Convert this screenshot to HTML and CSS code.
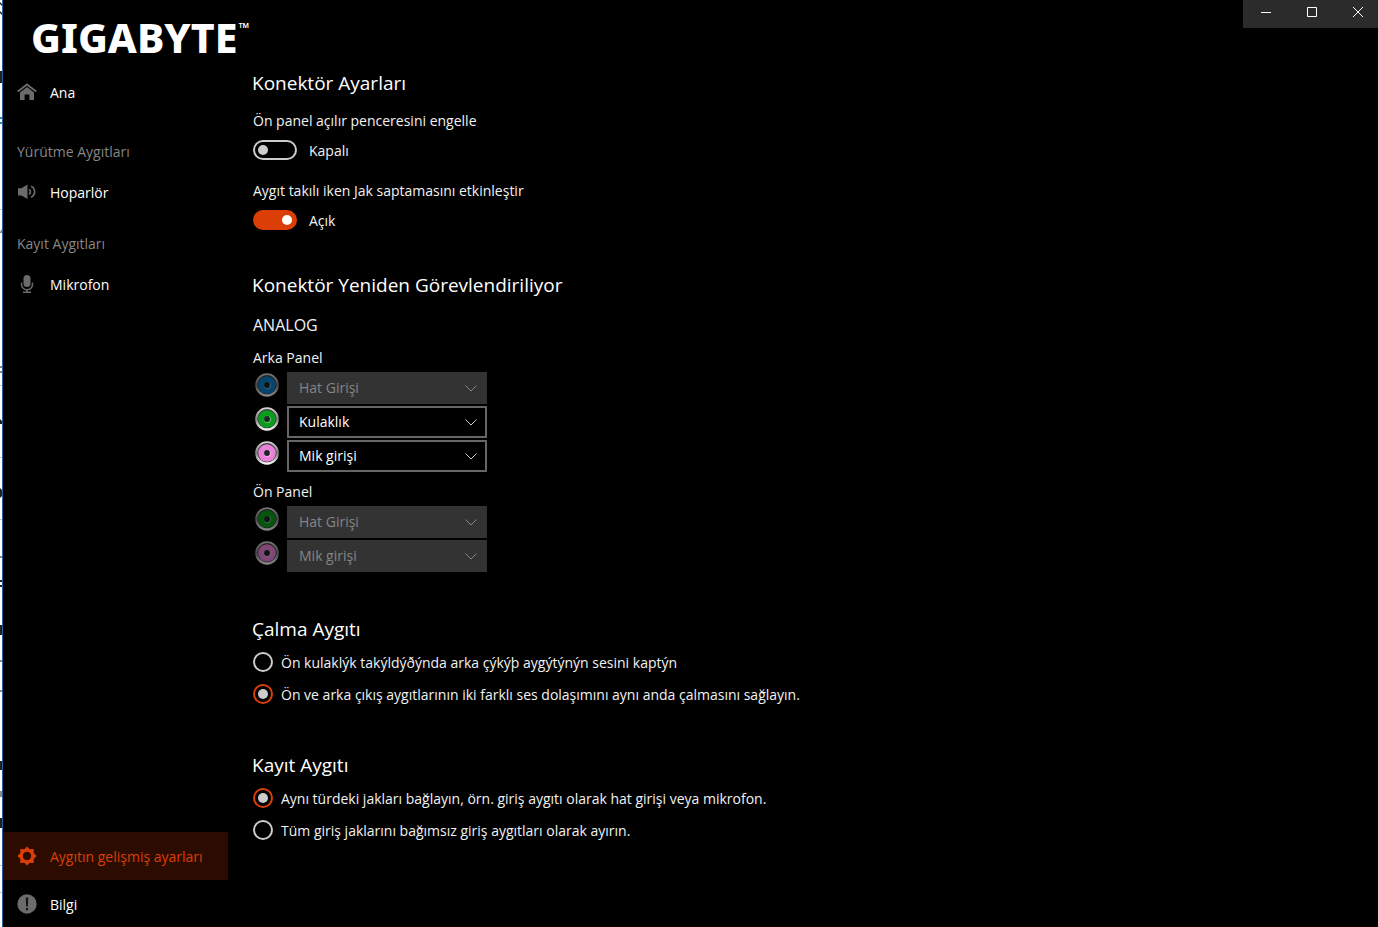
FILE: index.html
```html
<!DOCTYPE html>
<html lang="tr">
<head>
<meta charset="utf-8">
<title>GIGABYTE</title>
<link rel="stylesheet" href="styles.css">
</head>
<body>
<div class="window">
  <div class="backdrop" aria-hidden="true">
    <svg width="3" height="927" viewBox="0 0 3 927">
      <path fill="#222" d="M0 2l2 2v2L0 4zM0 11l2 2v2l-2-2zM0 71h2v12H0zM0 419l2 2v3H0zM0 488l2 2v6l-2 2zM0 580h2v2H0zM0 585h2v2H0zM0 625h2v10H0zM0 761h2v9H0zM0 818h2v10H0z"/>
      <path fill="#2a8fb0" d="M0 117h2v2H0zM0 122h2v2H0z"/>
      <path fill="#888" d="M0 232l2-3v4H0zM0 366h2v2H0zM0 371h2v2H0zM0 556h2v2H0zM0 660h2v2H0zM0 690h2v2H0zM0 791h2v6H0z"/>
      <path fill="#c8c8c8" d="M0 209h2v1H0zM0 385h2v1H0zM0 457h2v1H0zM0 519h2v1H0zM0 865h2v1H0zM0 892h2v1H0z"/>
      <path fill="#2a5f9a" d="M2 0h1v927H2z"/>
    </svg>
  </div>
  <aside class="sidebar">
    <div class="logo">GIGABYTE<span class="tm">™</span></div>
    <nav class="nav">
      <a class="item" href="#ana">
        <svg class="icon" viewBox="0 0 20 20"><path fill="none" stroke="#6b6b6b" stroke-width="2" d="M.8 9.500L10 2.400l9.200 7.100"/><path fill="#6b6b6b" d="M10 5l7 5.400V18h-4.600v-5.500H7.600V18H3v-7.600z"/></svg>
        <span>Ana</span></a>
      <h3 class="group first">Yürütme Aygıtları</h3>
      <a class="item" href="#hoparlor">
        <svg class="icon" viewBox="0 0 20 20"><path fill="#6b6b6b" d="M1 6.200h3.500L10.500 2.500v14.600l-6-3.700H1z"/><path fill="none" stroke="#6b6b6b" stroke-width="1.700" d="M12.200 7.300a3.200 3.200 0 0 1 0 5M14 4.300a6 6 0 0 1 0 11"/></svg>
        <span>Hoparlör</span></a>
      <h3 class="group">Kayıt Aygıtları</h3>
      <a class="item" href="#mikrofon">
        <svg class="icon" viewBox="0 0 20 20"><rect x="6.500" y="1" width="7" height="12" rx="3.500" fill="#6b6b6b"/><path fill="none" stroke="#6b6b6b" stroke-width="1.500" d="M4.500 8.500v2a5.500 5.200 0 0 0 11 0v-2M10 15.500V18M6 18.300h8"/></svg>
        <span>Mikrofon</span></a>
    </nav>
    <nav class="nav bottom">
      <a class="item active" href="#ayarlar">
        <svg class="icon" viewBox="0 0 20 20"><path fill="#dc3e07" fill-rule="evenodd" d="M10 .5l2.600 2.700 4.100-.1v3.900L19.500 10l-2.800 3v3.900l-4.100-.1L10 19.500l-2.600-2.700-4.100.1V13L.5 10l2.800-3V3.100l4.100.1zM10 5.800a4.200 4.200 0 1 0 0 8.400 4.200 4.200 0 0 0 0-8.400z"/></svg>
        <span>Aygıtın gelişmiş ayarları</span></a>
      <a class="item last" href="#bilgi">
        <svg class="icon" viewBox="0 0 20 20"><circle cx="10" cy="10" r="9.700" fill="#6b6b6b"/><path fill="#111" d="M8.800 3.500h2.400l-.4 9H9.200zM9 14h2v2.200H9z"/></svg>
        <span>Bilgi</span></a>
    </nav>
  </aside>
  <main class="main">
    <header class="titlebar">
      <div class="controls">
        <button type="button" aria-label="Simge durumuna küçült"><svg viewBox="0 0 10 10"><path d="M0 5.500h10"/></svg></button>
        <button type="button" aria-label="Ekranı kapla"><svg viewBox="0 0 10 10"><path d="M.5.5h9v9h-9z"/></svg></button>
        <button type="button" class="close" aria-label="Kapat"><svg viewBox="0 0 10 10"><path d="M0 0l10 10M10 0L0 10"/></svg></button>
      </div>
    </header>
    <div class="content">
      <section class="section">
        <h2>Konektör Ayarları</h2>
        <div class="setting">
          <label for="popup">Ön panel açılır penceresini engelle</label>
          <div class="switch-row"><input class="switch" type="checkbox" role="switch" id="popup"><span>Kapalı</span></div>
        </div>
        <div class="setting">
          <label for="detect">Aygıt takılı iken Jak saptamasını etkinleştir</label>
          <div class="switch-row"><input class="switch" type="checkbox" role="switch" id="detect" checked><span>Açık</span></div>
        </div>
      </section>

      <section class="section">
        <h2>Konektör Yeniden Görevlendiriliyor</h2>
        <svg class="defs" width="0" height="0" aria-hidden="true">
          <defs>
            <linearGradient id="rim" x1="0" y1="0" x2="0" y2="1"><stop offset="0" stop-color="#d8d8d8"/><stop offset=".5" stop-color="#808080"/><stop offset="1" stop-color="#fff"/></linearGradient>
            <symbol id="jack" viewBox="0 0 24 24">
              <circle cx="12" cy="12" r="11.800" fill="url(#rim)"/>
              <circle cx="12" cy="11.700" r="9.600" fill="#3a3a3a"/>
              <circle cx="12" cy="12" r="8.800" fill="currentColor"/>
              <circle cx="12.500" cy="12.500" r="3.700" fill="#fff" opacity=".3"/>
              <circle cx="12" cy="12" r="2.900" fill="#1c2424"/>
            </symbol>
          </defs>
        </svg>
        <h3 class="analog">ANALOG</h3>
        <h4 class="panel">Arka Panel</h4>
        <div class="ports">
          <div class="port off">
            <svg class="jack blue"><use href="#jack"/></svg>
            <div class="combo"><select aria-label="Arka Panel mavi jak" disabled><option>Hat Girişi</option></select><svg class="chevron" viewBox="0 0 12 7"><path d="M.5.5L6 6 11.500.5"/></svg></div>
          </div>
          <div class="port">
            <svg class="jack green"><use href="#jack"/></svg>
            <div class="combo"><select aria-label="Arka Panel yeşil jak"><option>Kulaklık</option></select><svg class="chevron" viewBox="0 0 12 7"><path d="M.5.5L6 6 11.500.5"/></svg></div>
          </div>
          <div class="port">
            <svg class="jack pink"><use href="#jack"/></svg>
            <div class="combo"><select aria-label="Arka Panel pembe jak"><option>Mik girişi</option></select><svg class="chevron" viewBox="0 0 12 7"><path d="M.5.5L6 6 11.500.5"/></svg></div>
          </div>
        </div>
        <h4 class="panel">Ön Panel</h4>
        <div class="ports">
          <div class="port off">
            <svg class="jack green"><use href="#jack"/></svg>
            <div class="combo"><select aria-label="Ön Panel yeşil jak" disabled><option>Hat Girişi</option></select><svg class="chevron" viewBox="0 0 12 7"><path d="M.5.5L6 6 11.500.5"/></svg></div>
          </div>
          <div class="port off">
            <svg class="jack pink"><use href="#jack"/></svg>
            <div class="combo"><select aria-label="Ön Panel pembe jak" disabled><option>Mik girişi</option></select><svg class="chevron" viewBox="0 0 12 7"><path d="M.5.5L6 6 11.500.5"/></svg></div>
          </div>
        </div>
      </section>

      <section class="section">
        <h2>Çalma Aygıtı</h2>
        <label class="radio"><input type="radio" name="play"><span>Ön kulaklýk takýldýðýnda arka çýkýþ aygýtýnýn sesini kaptýn</span></label>
        <label class="radio"><input type="radio" name="play" checked><span>Ön ve arka çıkış aygıtlarının iki farklı ses dolaşımını aynı anda çalmasını sağlayın.</span></label>
      </section>

      <section class="section">
        <h2>Kayıt Aygıtı</h2>
        <label class="radio"><input type="radio" name="rec" checked><span>Aynı türdeki jakları bağlayın, örn. giriş aygıtı olarak hat girişi veya mikrofon.</span></label>
        <label class="radio"><input type="radio" name="rec"><span>Tüm giriş jaklarını bağımsız giriş aygıtları olarak ayırın.</span></label>
      </section>
    </div>
  </main>
</div>
</body>
</html>
```
FILE: styles.css
```css
* {
  box-sizing: border-box;
}

body {
  margin: 0;
  background: #000;
  color: #f2f2f2;
  font: 14px/20px "Open Sans", "Noto Sans", sans-serif;
}

h2, h3, h4 {
  margin: 0;
  font-weight: 400;
}

.window {
  display: grid;
  grid-template-columns: 3px 225px 1fr;
  min-height: 100vh;
}

.backdrop {
  background: linear-gradient(to right, #fff 2px, #2a5f9a 2px);
  overflow: hidden;
}

.backdrop svg {
  display: block;
}

/* Sidebar */
.sidebar {
  display: flex;
  flex-direction: column;
}

.logo {
  display: flex;
  align-items: flex-start;
  gap: 1px;
  height: 68px;
  padding: 17px 0 0 28px;
  color: #fff;
  font-family: "Noto Sans", "Open Sans", sans-serif;
  font-size: 41px;
  font-weight: 800;
  line-height: 40px;
}

.tm {
  font-size: 14px;
  font-weight: 500;
  line-height: 22px;
}

.bottom {
  margin-top: auto;
}

.item {
  display: flex;
  align-items: center;
  gap: 13px;
  height: 48px;
  padding-left: 14px;
  color: #fff;
  text-decoration: none;
}

.item span,
.switch-row span,
.radio span {
  padding-top: 2px;
}

.icon {
  width: 20px;
  height: 20px;
}

.item.active {
  background: #2c0c01;
  color: #dc3e07;
}

.item.last {
  height: 47px;
}

.group {
  margin-top: 12px;
  padding-left: 14px;
  color: #868686;
  font-size: 14px;
  line-height: 32px;
}

.group.first {
  margin-top: 20px;
}

/* Title bar */
.titlebar {
  display: flex;
  justify-content: flex-end;
}

.controls {
  display: flex;
  width: 135px;
  background: #2b2b2b;
}

.controls button {
  display: flex;
  align-items: center;
  justify-content: center;
  width: 46px;
  height: 28px;
  padding: 0 0 4px;
  border: 0;
  background: none;
}

.controls .close {
  width: 43px;
  padding-left: 3px;
}

.controls svg {
  width: 10px;
  height: 10px;
  overflow: visible;
  fill: none;
  stroke: #fff;
}

/* Content */
.content {
  display: flex;
  flex-direction: column;
  gap: 41px;
  padding: 41px 24px 24px;
}

h2 {
  color: #fff;
  font-size: 19px;
  line-height: 28px;
}

.setting {
  display: flex;
  flex-direction: column;
  gap: 9px;
  padding: 14px 0 0 1px;
}

.setting + .setting {
  padding-top: 21px;
}

.switch-row {
  display: flex;
  align-items: center;
  gap: 12px;
  height: 20px;
}

.switch {
  display: flex;
  align-items: center;
  appearance: none;
  width: 44px;
  height: 20px;
  margin: 0;
  padding: 0 3px;
  border: 2px solid #ccc;
  border-radius: 10px;
}

.switch::before {
  content: "";
  width: 10px;
  height: 10px;
  border-radius: 50%;
  background: #ccc;
}

.switch:checked {
  justify-content: flex-end;
  border-color: #dc3e07;
  background: #dc3e07;
}

.switch:checked::before {
  background: #fff;
}

.defs {
  display: block;
}

.analog {
  padding: 14px 0 11px 1px;
  font-size: 16px;
  line-height: 24px;
}

.panel {
  padding-left: 1px;
  font-size: 14px;
}

.ports {
  display: flex;
  flex-direction: column;
  gap: 2px;
  padding: 4px 0 10px 3px;
}

.ports:last-child {
  padding-bottom: 2px;
}

.port {
  display: flex;
  align-items: flex-start;
  gap: 8px;
}

.jack {
  width: 24px;
  height: 24px;
  margin-top: 1px;
}

.off .jack {
  opacity: 0.55;
}

.blue {
  color: #0a7cc8;
}

.green {
  color: #0a9c1c;
}

.pink {
  color: #ea80d8;
}

.combo {
  display: grid;
  grid-template-columns: 1fr 22px;
  align-items: center;
  width: 200px;
}

.combo select {
  grid-area: 1 / 1 / 2 / 3;
  appearance: none;
  height: 32px;
  padding: 0 10px;
  border: 2px solid #666;
  border-radius: 0;
  background: #000;
  color: #fff;
  font: inherit;
}

.combo select:disabled {
  border-color: #333;
  background: #333;
  color: #858585;
  opacity: 1;
}

.chevron {
  grid-area: 1 / 2;
  width: 12px;
  height: 7px;
  fill: none;
  stroke: #ccc;
  pointer-events: none;
}

.off .chevron {
  stroke: #858585;
}

.radio {
  display: flex;
  align-items: center;
  gap: 8px;
  height: 32px;
  padding-left: 1px;
}

h2 + .radio {
  margin-top: 3px;
}

.radio input {
  display: grid;
  place-items: center;
  appearance: none;
  width: 20px;
  height: 20px;
  margin: 0;
  border: 2px solid #ccc;
  border-radius: 50%;
}

.radio input:checked {
  border-color: #dc3e07;
}

.radio input:checked::before {
  content: "";
  width: 10px;
  height: 10px;
  border-radius: 50%;
  background: #ccc;
}
```
